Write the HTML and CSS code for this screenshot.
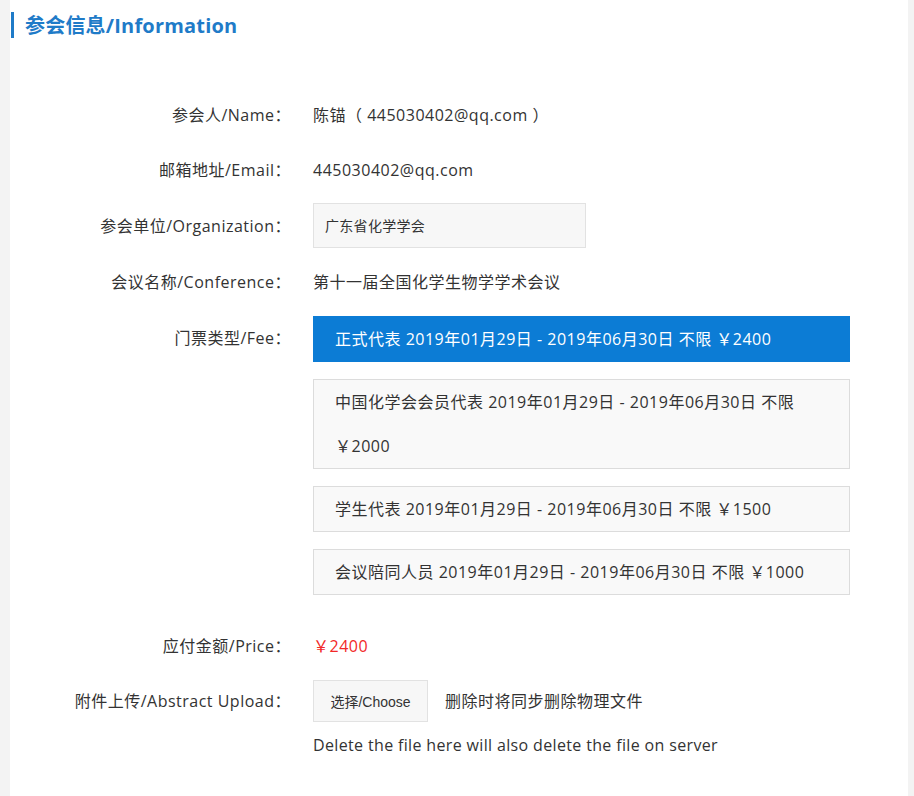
FILE: index.html
```html
<!DOCTYPE html>
<html lang="zh-CN">
<head>
<meta charset="utf-8">
<title>参会信息</title>
<link rel="stylesheet" href="styles.css">
</head>
<body>
<div class="page">
  <h2 class="section-title">参会信息/Information</h2>
  <div class="form">
    <div class="row">
      <div class="label">参会人/Name：</div>
      <div class="value">陈锚（ 445030402@qq.com ）</div>
    </div>
    <div class="row">
      <div class="label">邮箱地址/Email：</div>
      <div class="value">445030402@qq.com</div>
    </div>
    <div class="row">
      <div class="label">参会单位/Organization：</div>
      <div class="value"><div class="input-box">广东省化学学会</div></div>
    </div>
    <div class="row row-gap1">
      <div class="label">会议名称/Conference：</div>
      <div class="value">第十一届全国化学生物学学术会议</div>
    </div>
    <div class="row row-top row-gap1">
      <div class="label">门票类型/Fee：</div>
      <div class="value">
        <div class="fee-list">
          <div class="fee fee-active">正式代表 2019年01月29日 - 2019年06月30日 不限 ￥2400</div>
          <div class="fee">中国化学会会员代表 2019年01月29日 - 2019年06月30日 不限 ￥2000</div>
          <div class="fee">学生代表 2019年01月29日 - 2019年06月30日 不限 ￥1500</div>
          <div class="fee">会议陪同人员 2019年01月29日 - 2019年06月30日 不限 ￥1000</div>
        </div>
      </div>
    </div>
    <div class="row row-price">
      <div class="label">应付金额/Price：</div>
      <div class="value price">￥2400</div>
    </div>
    <div class="row row-top">
      <div class="label">附件上传/Abstract Upload：</div>
      <div class="value">
        <div class="upload-line">
          <button class="choose-btn" type="button">选择/Choose</button>
          <span class="upload-hint">删除时将同步删除物理文件</span>
        </div>
        <div class="upload-note">Delete the file here will also delete the file on server</div>
      </div>
    </div>
  </div>
</div>
</body>
</html>
```

FILE: styles.css
```css
html, body {
  margin: 0;
  padding: 0;
}
body {
  background: #f3f3f3;
  font-family: "Open Sans", "Noto Sans CJK SC", sans-serif;
  color: #333;
  font-size: 16px;
  letter-spacing: 0.5px;
}
.page {
  margin-left: 10px;
  width: 898px;
  min-height: 796px;
  background: #fff;
  padding-top: 12px;
  box-sizing: border-box;
}
.section-title {
  margin: 0 0 0 1px;
  height: 26px;
  box-sizing: border-box;
  padding-top: 2px;
  line-height: 24px;
  border-left: 3px solid #1f7bc8;
  padding-left: 11px;
  font-size: 20px;
  font-weight: bold;
  letter-spacing: 0.2px;
  color: #1f7bc8;
}
.form {
  margin-top: 55px;
  display: flex;
  flex-direction: column;
  gap: 11px;
}
.row {
  display: grid;
  grid-template-columns: 281px 1fr;
  column-gap: 22px;
  align-items: center;
  min-height: 44px;
}
.row-gap1 {
  margin-top: 1px;
}
.row-top {
  align-items: start;
}
.label {
  text-align: right;
  line-height: 44px;
  white-space: nowrap;
}
.value {
  line-height: 24px;
}
.input-box {
  width: 273px;
  height: 45px;
  box-sizing: border-box;
  background: #f7f7f7;
  border: 1px solid #e2e2e2;
  font-size: 14px;
  letter-spacing: 0.3px;
  line-height: 43px;
  padding-left: 11px;
}
.fee-list {
  display: flex;
  flex-direction: column;
  gap: 17px;
  width: 537px;
}
.fee {
  box-sizing: border-box;
  border: 1px solid #dcdcdc;
  background: #f9f9f9;
  line-height: 44px;
  padding: 0 30px 0 21px;
}
.fee-active {
  background: #0c7cd5;
  border-color: #0c7cd5;
  color: #fff;
}
.row-price {
  margin-top: 18px;
}
.price {
  color: #f22828;
}
.upload-line {
  display: flex;
  align-items: center;
  gap: 17px;
  margin-top: 1px;
}
.choose-btn {
  width: 115px;
  height: 42px;
  background: #f7f7f7;
  border: 1px solid #e2e2e2;
  font-family: "Liberation Sans", "Noto Sans CJK SC", sans-serif;
  font-size: 14px;
  letter-spacing: 0;
  color: #333;
  padding: 0;
}
.upload-hint {
  line-height: 24px;
}
.upload-note {
  margin-top: 11px;
  line-height: 24px;
  letter-spacing: 0.35px;
}
```
